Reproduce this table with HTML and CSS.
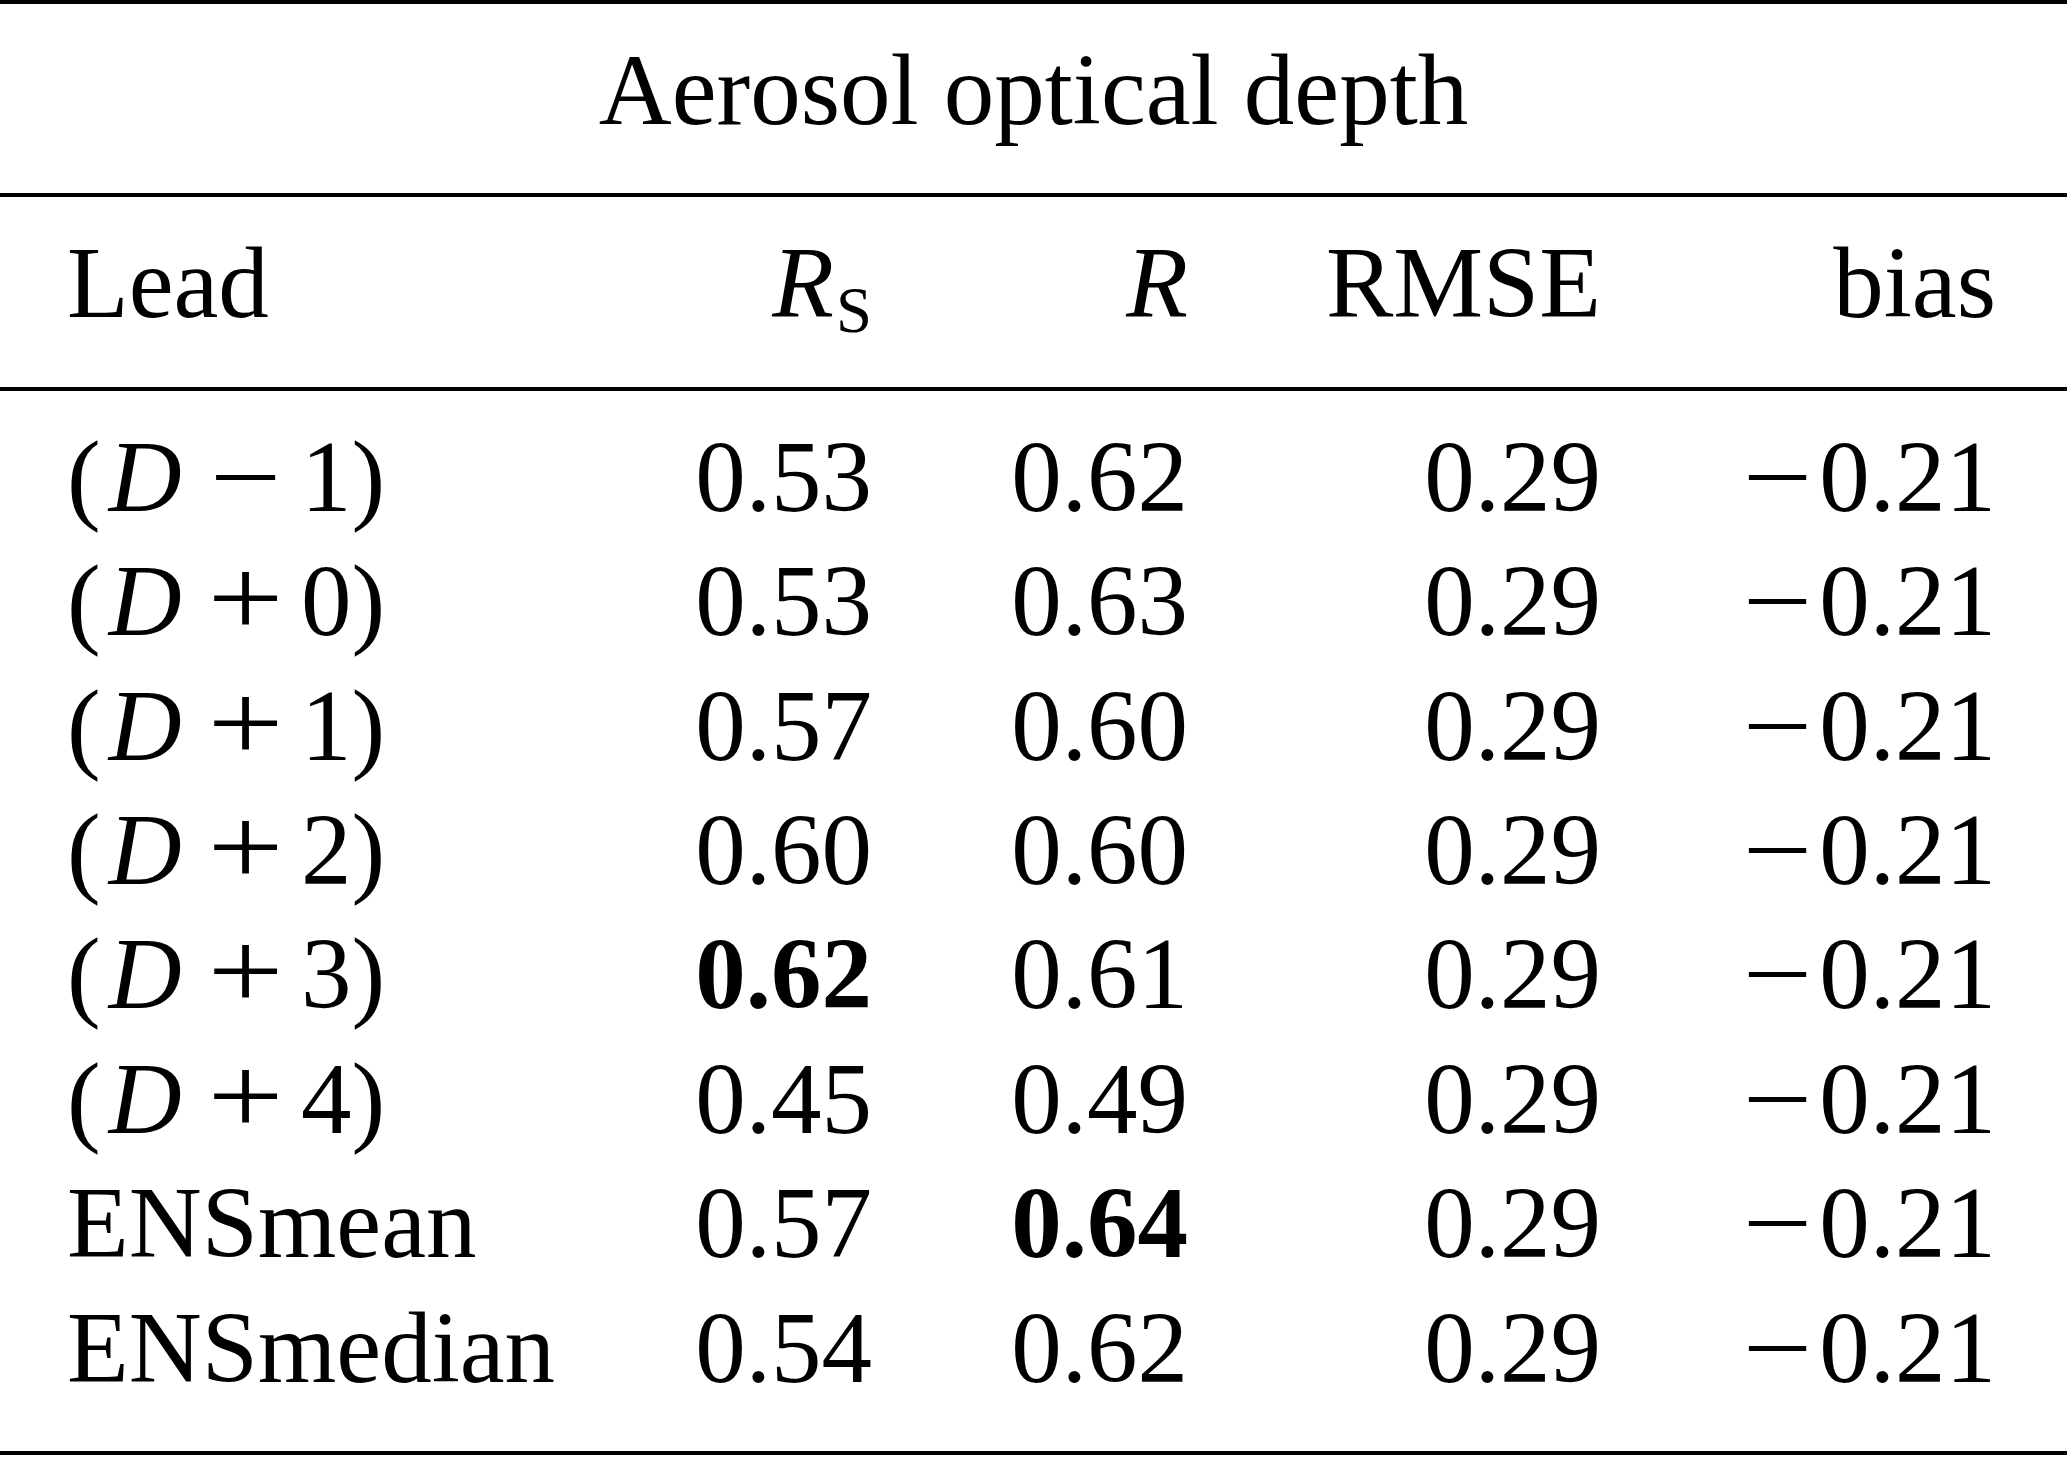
FILE: index.html
```html
<!DOCTYPE html>
<html lang="en">
<head>
<meta charset="utf-8">
<title>Aerosol optical depth</title>
<link rel="stylesheet" href="styles.css">
</head>
<body>
<div class="table">
  <div class="rule"></div>
  <div class="section title">Aerosol optical depth</div>
  <div class="rule"></div>
  <div class="section">
    <div class="row">
      <div class="cell lead">Lead</div>
      <div class="cell"><i>R</i><span class="sub">S</span></div>
      <div class="cell"><i>R</i></div>
      <div class="cell">RMSE</div>
      <div class="cell">bias</div>
    </div>
  </div>
  <div class="rule"></div>
  <div class="section">
    <div class="row">
      <div class="cell lead">(<i class="var">D</i><span class="op">−</span>1)</div>
      <div class="cell">0.53</div><div class="cell">0.62</div><div class="cell">0.29</div><div class="cell"><span class="neg">−</span>0.21</div>
    </div>
    <div class="row">
      <div class="cell lead">(<i class="var">D</i><span class="op plus">+</span>0)</div>
      <div class="cell">0.53</div><div class="cell">0.63</div><div class="cell">0.29</div><div class="cell"><span class="neg">−</span>0.21</div>
    </div>
    <div class="row">
      <div class="cell lead">(<i class="var">D</i><span class="op plus">+</span>1)</div>
      <div class="cell">0.57</div><div class="cell">0.60</div><div class="cell">0.29</div><div class="cell"><span class="neg">−</span>0.21</div>
    </div>
    <div class="row">
      <div class="cell lead">(<i class="var">D</i><span class="op plus">+</span>2)</div>
      <div class="cell">0.60</div><div class="cell">0.60</div><div class="cell">0.29</div><div class="cell"><span class="neg">−</span>0.21</div>
    </div>
    <div class="row">
      <div class="cell lead">(<i class="var">D</i><span class="op plus">+</span>3)</div>
      <div class="cell"><b>0.62</b></div><div class="cell">0.61</div><div class="cell">0.29</div><div class="cell"><span class="neg">−</span>0.21</div>
    </div>
    <div class="row">
      <div class="cell lead">(<i class="var">D</i><span class="op plus">+</span>4)</div>
      <div class="cell">0.45</div><div class="cell">0.49</div><div class="cell">0.29</div><div class="cell"><span class="neg">−</span>0.21</div>
    </div>
    <div class="row">
      <div class="cell lead">ENSmean</div>
      <div class="cell">0.57</div><div class="cell"><b>0.64</b></div><div class="cell">0.29</div><div class="cell"><span class="neg">−</span>0.21</div>
    </div>
    <div class="row">
      <div class="cell lead">ENSmedian</div>
      <div class="cell">0.54</div><div class="cell">0.62</div><div class="cell">0.29</div><div class="cell"><span class="neg">−</span>0.21</div>
    </div>
  </div>
  <div class="rule"></div>
</div>
</body>
</html>
```

FILE: styles.css
```css
html, body {
  margin: 0;
  padding: 0;
  background: #ffffff;
}

.table {
  width: 2067px;
  font-family: "Liberation Serif", "Times New Roman", serif;
  font-size: 101px;
  line-height: 124.4px;
  color: #000000;
}

.rule {
  height: 4px;
  background: #000000;
}

.section {
  padding: 24px 71px 41px 67px;
}

.title {
  text-align: center;
  padding-left: 0;
  padding-right: 0;
}

.row {
  display: grid;
  grid-template-columns: 433px 372px 316px 413px 395px;
}

.cell {
  text-align: right;
  white-space: nowrap;
}

.cell.lead {
  text-align: left;
}

.cell b {
  font-weight: 700;
}

.sub {
  font-size: 0.64em;
  position: relative;
  top: 0.22em;
  line-height: 0;
  margin-left: 2px;
}

.var {
  margin-left: 8px;
}

.op,
.neg {
  display: inline-block;
  line-height: 1em;
}

.op {
  margin: 0 27.5px 0 35px;
  transform: scaleX(1.257);
}

.op.plus {
  transform: scale(1.336, 1.11);
  transform-origin: 50% 0.7395em;
}

.neg {
  margin-right: 13.75px;
  transform: scaleX(1.22);
}
```
